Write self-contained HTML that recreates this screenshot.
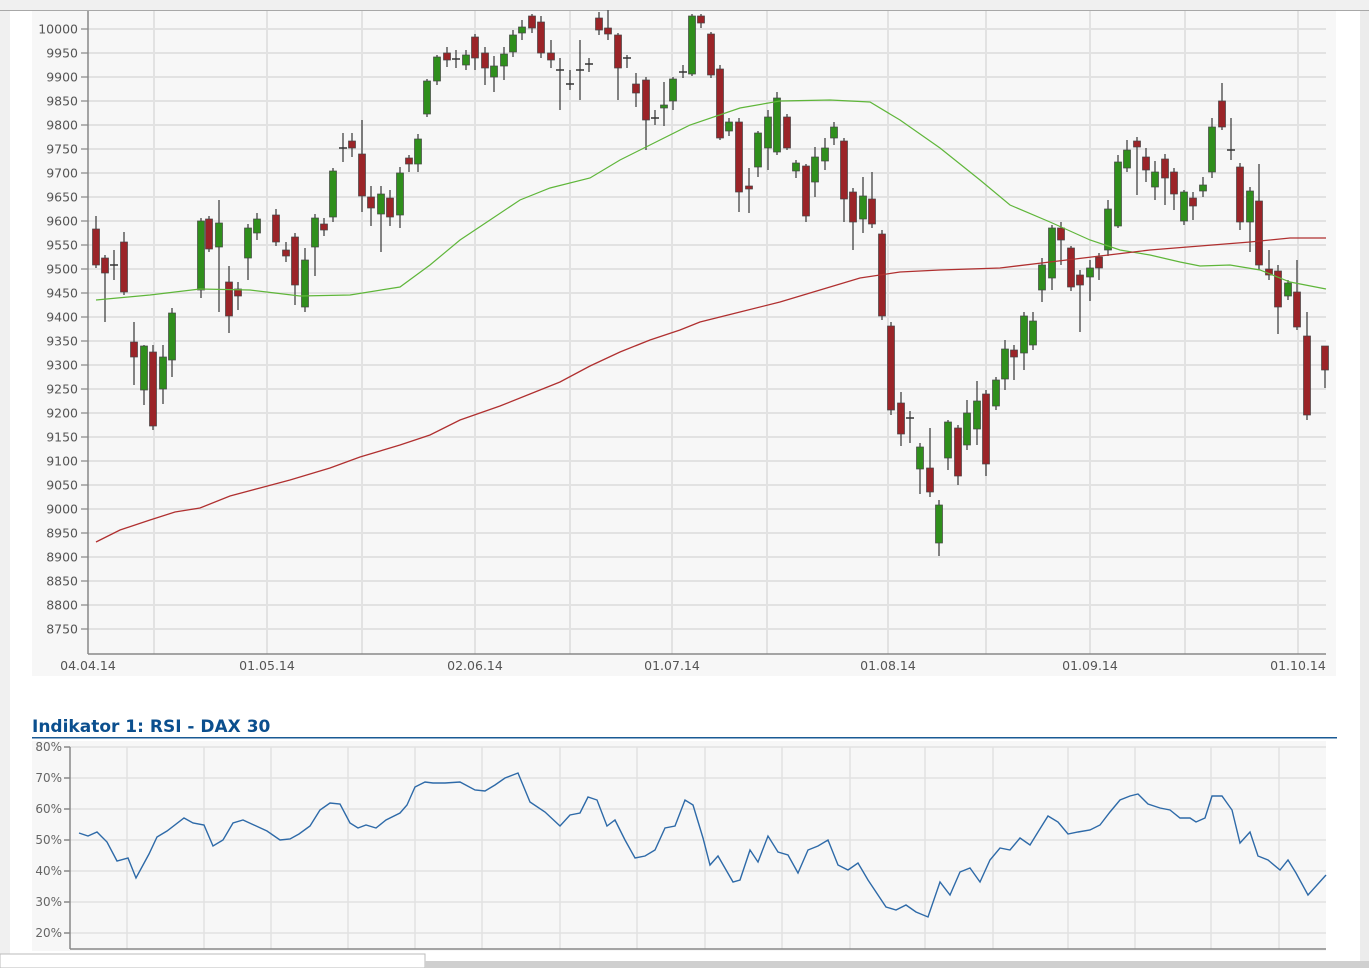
<!DOCTYPE html>
<html><head><meta charset="utf-8"><style>
html,body{margin:0;padding:0;width:1369px;height:968px;overflow:hidden;background:#fff;font-family:"DejaVu Sans","Liberation Sans",sans-serif}
svg{position:absolute;left:0;top:0}
</style></head><body>
<svg id="s" width="1369" height="968" xmlns="http://www.w3.org/2000/svg" font-family="DejaVu Sans, Liberation Sans, sans-serif">
<rect x="0" y="0" width="1369" height="10" fill="#f0f0f0"/>
<rect x="0" y="10" width="1369" height="1" fill="#a8a8a8"/>
<rect x="0" y="11" width="10" height="957" fill="#f0f0f0"/>
<rect x="1360" y="11" width="9" height="957" fill="#ececec"/>
<rect x="32" y="11" width="1304" height="665" fill="#f7f7f7"/>
<g id="grid" stroke="#e2e2e2" stroke-width="2"></g>
<g id="ylab" font-size="12.5" fill="#555" text-anchor="end"></g>
<line x1="88" y1="11" x2="88" y2="654" stroke="#888" stroke-width="1.5"/>
<line x1="88" y1="654" x2="1326" y2="654" stroke="#888" stroke-width="1.5"/>
<g font-size="12.5" fill="#555" text-anchor="middle">
<text x="88" y="670">04.04.14</text><text x="267" y="670">01.05.14</text><text x="475" y="670">02.06.14</text><text x="672" y="670">01.07.14</text><text x="888" y="670">01.08.14</text><text x="1090" y="670">01.09.14</text><text x="1298" y="670">01.10.14</text>
</g>
<g id="cand"></g>
<polyline fill="none" stroke="#5fb63a" stroke-width="1.2" points="96,300 150,295 200,289 250,290 300,296 350,295 400,287 430,265 460,240 490,220 520,200 550,188 590,178 620,160 650,145 690,125 740,108 780,101 830,100 870,102 900,120 940,148 980,180 1010,205 1050,222 1090,240 1120,250 1150,255 1180,262 1200,266 1230,265 1260,270 1290,282 1326,289"/>
<polyline fill="none" stroke="#b03030" stroke-width="1.3" points="96,542 120,530 150,520 175,512 200,508 230,496 260,488 290,480 330,468 360,457 400,445 430,435 460,420 500,406 530,394 560,382 590,366 620,352 650,340 680,330 700,322 740,312 780,302 820,290 860,278 900,272 940,270 1000,268 1050,262 1100,256 1150,250 1200,246 1250,242 1290,238 1326,238"/>
<text x="32" y="732" font-size="17" font-weight="bold" fill="#0b4f8e">Indikator 1: RSI - DAX 30</text>
<rect x="32" y="737" width="1305" height="1.5" fill="#1a5a94"/>
<rect x="32" y="741" width="1294" height="210" fill="#f7f7f7"/>
<g id="rgrid" stroke="#e2e2e2" stroke-width="1.5"></g>
<g id="rlab" font-size="12" fill="#666" text-anchor="end"></g>
<line x1="70" y1="747" x2="70" y2="949" stroke="#888" stroke-width="1.5"/>
<line x1="70" y1="949" x2="1326" y2="949" stroke="#888" stroke-width="1.5"/>
<polyline fill="none" stroke="#2e6aa8" stroke-width="1.4" points="79,833 88,836 97,832 107,842 117,861 128,858 136,878 149,854 157,837 167,831 184,818 193,823 204,825 213,846 223,840 233,823 243,820 267,831 280,840 290,839 299,834 310,826 320,810 330,803 340,804 350,823 358,828 366,825 376,828 386,820 400,813 407,805 415,787 425,782 433,783 445,783 460,782 475,790 485,791 495,785 505,778 518,773 530,802 545,812 560,826 570,815 580,813 588,797 597,800 607,826 615,820 625,840 635,858 645,856 655,850 665,828 675,826 685,800 693,805 703,838 710,865 718,856 733,882 740,880 750,850 758,862 768,836 778,852 788,855 798,873 808,850 818,846 828,840 838,865 848,870 858,863 868,880 886,907 896,910 906,905 916,912 928,917 940,882 950,895 960,872 970,868 980,882 990,860 1000,848 1010,850 1020,838 1030,845 1038,832 1048,816 1058,822 1068,834 1078,832 1090,830 1100,825 1110,812 1120,800 1130,796 1138,794 1148,804 1160,808 1170,810 1180,818 1190,818 1196,822 1205,818 1212,796 1222,796 1232,810 1240,843 1250,832 1258,856 1268,860 1280,870 1288,860 1296,873 1308,895 1326,875"/>
<rect x="0" y="954" width="425" height="14" fill="#fff" stroke="#bbb"/>
<rect x="425" y="961" width="944" height="7" fill="#cfcfcf"/>
</svg>
<script>
var NS="http://www.w3.org/2000/svg";
function el(p,t,a){var e=document.createElementNS(NS,t);for(var k in a)e.setAttribute(k,a[k]);p.appendChild(e);return e;}
var g=document.getElementById('grid'),yl=document.getElementById('ylab');
for(var p=10000;p>=8750;p-=50){var y=29+(10000-p)*0.48;el(g,'line',{x1:88,y1:y,x2:1326,y2:y});el(g,'line',{x1:81,y1:y,x2:88,y2:y,stroke:'#888','stroke-width':1.2});var t=el(yl,'text',{x:78,y:y+4.5});t.textContent=p;}
[154,267,362,475,570,672,767,888,986,1090,1185,1298].forEach(function(x){el(g,'line',{x1:x,y1:11,x2:x,y2:654});});
var rg=document.getElementById('rgrid'),rl=document.getElementById('rlab');
for(var v=80;v>=20;v-=10){var y=747+(80-v)*3.1;el(rg,'line',{x1:70,y1:y,x2:1326,y2:y});el(rg,'line',{x1:64,y1:y,x2:70,y2:y,stroke:'#888'});var t=el(rl,'text',{x:62,y:y+4});t.textContent=v+'%';}
[127,204,271,348,415,482,560,637,705,782,850,925,993,1068,1135,1211,1279].forEach(function(x){el(rg,'line',{x1:x,y1:747,x2:x,y2:949});});
var c=document.getElementById('cand');
var D=[[96,'r',229,265,216,268],[105,'r',258,273,255,322],[114,'d',265,265,250,280],[124,'r',242,292,232,295],[134,'r',342,357,322,385],[144,'g',346,390,345,405],[153,'r',352,426,345,430],[163,'g',357,389,345,404],[172,'g',313,360,308,377],[201,'g',221,290,218,298],[209,'r',219,249,216,252],[219,'g',223,247,200,312],[229,'r',282,316,266,333],[238,'r',289,296,282,310],[248,'g',228,258,224,280],[257,'g',219,233,213,240],[276,'r',215,242,209,246],[286,'r',250,256,242,262],[295,'r',237,285,233,305],[305,'g',260,307,248,312],[315,'g',218,247,214,276],[324,'r',224,230,218,236],[333,'g',171,217,168,222],[343,'d',148,148,133,162],[352,'r',141,148,133,157],[362,'r',154,196,120,212],[371,'r',197,208,186,226],[381,'g',194,214,186,252],[390,'r',198,217,190,226],[400,'g',173,215,167,228],[409,'r',158,164,155,172],[418,'g',139,164,134,172],[427,'g',81,114,79,117],[437,'g',57,81,55,85],[447,'r',53,60,47,67],[456,'d',59,59,50,68],[466,'g',55,65,50,70],[475,'r',37,58,34,70],[485,'r',53,68,47,85],[494,'g',66,77,56,92],[504,'g',54,66,47,80],[513,'g',35,52,30,57],[522,'g',27,33,20,40],[532,'r',16,28,14,33],[541,'r',22,53,16,58],[551,'r',53,60,40,68],[560,'d',70,70,58,110],[570,'d',84,84,70,90],[580,'d',70,70,40,100],[589,'d',64,64,58,72],[599,'r',18,30,12,35],[608,'r',28,34,10,40],[618,'r',35,68,33,100],[627,'d',58,58,55,68],[636,'r',84,93,73,107],[646,'r',80,120,77,150],[655,'d',118,118,110,125],[664,'g',105,108,82,126],[673,'g',79,101,77,110],[683,'d',72,72,65,78],[692,'g',16,74,14,76],[701,'r',16,23,14,28],[711,'r',34,75,32,78],[720,'r',69,138,65,140],[729,'g',122,131,118,136],[739,'r',122,192,118,212],[749,'r',186,189,168,213],[758,'g',133,167,131,177],[768,'g',117,148,110,170],[777,'g',98,152,92,155],[787,'r',117,148,114,150],[796,'g',163,171,160,178],[806,'r',166,216,164,222],[815,'g',157,182,147,197],[825,'g',148,161,138,170],[834,'g',127,138,122,145],[844,'r',141,199,138,222],[853,'r',192,222,188,250],[863,'g',196,219,177,233],[872,'r',199,224,172,228],[882,'r',234,316,230,320],[891,'r',326,410,322,415],[901,'r',403,434,392,446],[910,'d',418,418,411,443],[920,'g',447,469,443,494],[930,'r',468,492,428,497],[939,'g',505,543,500,556],[948,'g',422,458,420,470],[958,'r',428,476,425,485],[967,'g',413,445,400,450],[977,'g',401,429,381,445],[986,'r',394,464,390,476],[996,'g',380,406,377,410],[1005,'g',349,379,340,390],[1014,'r',350,357,345,380],[1024,'g',316,353,312,370],[1033,'g',321,345,312,350],[1042,'g',265,290,258,302],[1052,'g',228,278,225,290],[1061,'r',228,240,222,265],[1071,'r',248,287,246,291],[1080,'r',275,285,270,332],[1090,'g',268,277,260,301],[1099,'r',257,268,253,280],[1108,'g',209,250,200,256],[1118,'g',162,226,155,228],[1127,'g',150,168,140,172],[1137,'r',141,147,137,195],[1146,'r',157,170,148,182],[1155,'g',172,187,161,200],[1165,'r',159,178,154,205],[1174,'r',172,194,168,210],[1184,'g',192,221,190,225],[1193,'r',198,206,192,220],[1203,'g',185,191,177,197],[1212,'g',127,172,118,178],[1222,'r',101,127,83,130],[1231,'d',150,150,118,160],[1240,'r',167,222,163,230],[1250,'g',191,222,187,252],[1259,'r',201,265,164,270],[1269,'r',269,275,250,280],[1278,'r',271,307,265,334],[1288,'g',283,296,280,300],[1297,'r',292,327,260,330],[1307,'r',336,415,312,420],[1325,'r',346,370,346,388]];
D.forEach(function(d){var x=d[0];el(c,'line',{x1:x,y1:d[4],x2:x,y2:d[5],stroke:'#444','stroke-width':1.3});
if(d[1]=='d'){el(c,'line',{x1:x-4,y1:d[2],x2:x+4,y2:d[2],stroke:'#333','stroke-width':1.5});}
else{el(c,'rect',{x:x-3.5,y:d[2],width:7,height:Math.max(2,d[3]-d[2]),fill:d[1]=='r'?'#9b2428':'#2f8f1c',stroke:'#444','stroke-width':0.7});}});
</script>
</body></html>
